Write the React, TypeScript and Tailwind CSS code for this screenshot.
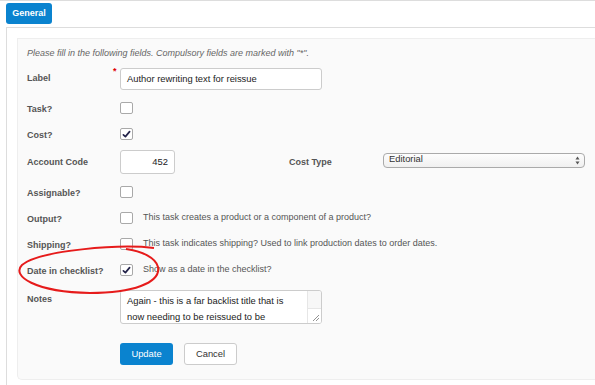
import React from "react";

const font = { fontFamily: '"Liberation Sans", Arial, sans-serif' };

function Box({ checked }: { checked?: boolean }) {
  return (
    <span className="flex h-[12px] w-[13px] shrink-0 items-center justify-center rounded-[2px] border border-[#a9a9a9] bg-white">
      {checked && (
        <svg width="9" height="8" viewBox="0 0 9 8">
          <path d="M1.4 4.8 L3.4 6.6 L7.6 1.6" fill="none" stroke="#23234a" strokeWidth="1.7" strokeLinecap="round" strokeLinejoin="round" />
        </svg>
      )}
    </span>
  );
}

function Label({ children, extra }: { children: React.ReactNode; extra?: string }) {
  return (
    <span className={"w-[93px] shrink-0 text-[9px] font-bold text-[#555] " + (extra ?? "pt-[4px]")}>{children}</span>
  );
}

function CheckRow({ label, checked, desc, h }: { label: string; checked?: boolean; desc?: string; h: string }) {
  return (
    <div className={"flex items-center " + h}>
      <Label>{label}</Label>
      <Box checked={checked} />
      {desc && <span className="ml-[10px] text-[9px] text-[#555]">{desc}</span>}
    </div>
  );
}

export default function App() {
  return (
    <div className="relative h-[385px] w-[595px] overflow-hidden border-t border-[#dddddd] bg-white" style={font}>
      <div className="ml-[6px] mt-[2px] flex h-[21px] w-[46px] items-center justify-center rounded-[3px] bg-[#0a83cf] text-[9px] font-bold text-white">
        General
      </div>
      <div className="ml-[6px] mt-[3px] h-[360px] border-l border-t border-[#dddddd] pl-[10px] pt-[10px]">
        <div className="h-[342px] rounded-bl-[5px] border-b border-l border-t border-[#eeeeee] bg-[#fafafa] pl-[9px] pr-[10px]">
          <div className="mt-[8px] flex h-[14px] items-center text-[9px] italic text-[#666]">
            Please fill in the following fields. Compulsory fields are marked with "*".
          </div>
          <div className="mt-[7px] flex h-[22px] items-center">
            <span className="relative w-[93px] shrink-0 text-[9px] font-bold text-[#555]">
              Label
              <span className="absolute left-[86px] top-[-7px] text-[9px] font-bold text-[#e00000]">*</span>
            </span>
            <div className="flex h-[22px] w-[202px] items-center rounded-[3px] border border-[#cccccc] bg-white pl-[6px] text-[9.4px] text-[#222]">
              Author rewriting text for reissue
            </div>
          </div>
          <div className="mt-[10px]">
            <CheckRow label="Task?" h="h-[16px]" />
          </div>
          <div className="mt-[10px]">
            <CheckRow label="Cost?" checked h="h-[16px]" />
          </div>
          <div className="mt-[8px] flex h-[24px] items-center">
            <Label extra="pt-[2px]">Account Code</Label>
            <div className="flex h-[24px] w-[55px] shrink-0 items-center justify-end rounded-[3px] border border-[#cccccc] bg-white pr-[6px] text-[9.4px] text-[#222]">
              452
            </div>
            <span className="ml-[114px] w-[94px] shrink-0 pt-[2px] text-[9px] font-bold text-[#555]">Cost Type</span>
            <div className="mb-[3px] flex h-[15px] flex-1 items-center justify-between rounded-[4px] border border-[#aaaaaa] bg-gradient-to-b from-[#fdfdfd] to-[#f0f0f0] pl-[5px] pr-[4px] text-[9.4px] text-[#333]">
              <span className="-mt-[2px]">Editorial</span>
              <svg width="5" height="9" viewBox="0 0 5 9">
                <path d="M2.5 0.5 L4.5 3.5 L0.5 3.5 Z" fill="#555" />
                <path d="M2.5 8.5 L4.5 5.5 L0.5 5.5 Z" fill="#555" />
              </svg>
            </div>
          </div>
          <div className="mt-[10px]">
            <CheckRow label="Assignable?" h="h-[16px]" />
          </div>
          <div className="mt-[10px]">
            <CheckRow label="Output?" h="h-[16px]" desc="This task creates a product or a component of a product?" />
          </div>
          <div className="mt-[10px]">
            <CheckRow label="Shipping?" h="h-[16px]" desc="This task indicates shipping? Used to link production dates to order dates." />
          </div>
          <div className="mt-[10px]">
            <CheckRow label="Date in checklist?" checked h="h-[16px]" desc="Show as a date in the checklist?" />
          </div>
          <div className="mt-[12px] flex items-start">
            <span className="w-[93px] shrink-0 pt-[3px] text-[9px] font-bold text-[#555]">Notes</span>
            <div className="relative flex h-[34px] w-[202px] overflow-hidden rounded-[3px] border border-[#cccccc] bg-white">
              <div className="flex-1 pl-[6px] pt-[2px] text-[9.4px] leading-[16px] text-[#222]">
                <div>Again - this is a far backlist title that is</div>
                <div>now needing to be reissued to be</div>
              </div>
              <div className="flex w-[14px] flex-col border-l border-[#e6e6e6] bg-[#f7f7f7]">
                <div className="flex-1" />
                <div className="h-[15px] border-t border-[#e6e6e6] bg-white" />
              </div>
              <svg className="absolute bottom-[1px] right-[1px]" width="8" height="8" viewBox="0 0 8 8">
                <path d="M7 1 L1 7 M7 4 L4 7" stroke="#777" strokeWidth="0.8" />
              </svg>
            </div>
          </div>
          <div className="mt-[19px] flex items-center gap-[11px] pl-[93px]">
            <div className="flex h-[22px] w-[53px] items-center justify-center rounded-[3px] bg-[#0a83cf] text-[9.4px] text-white">
              Update
            </div>
            <div className="flex h-[22px] w-[53px] items-center justify-center rounded-[3px] border border-[#cccccc] bg-white text-[9.4px] text-[#333]">
              Cancel
            </div>
          </div>
        </div>
      </div>
      <svg className="pointer-events-none absolute left-0 top-0" width="595" height="385" viewBox="0 0 595 385">
        <path
          d="M154 247 C 120 243, 40 249, 22 264 C 11 275, 35 291, 90 292 C 132 292, 161 282, 158 266 C 156 257, 142 250, 126 248"
          fill="none"
          stroke="#e61b1b"
          strokeWidth="2"
        />
      </svg>
    </div>
  );
}
